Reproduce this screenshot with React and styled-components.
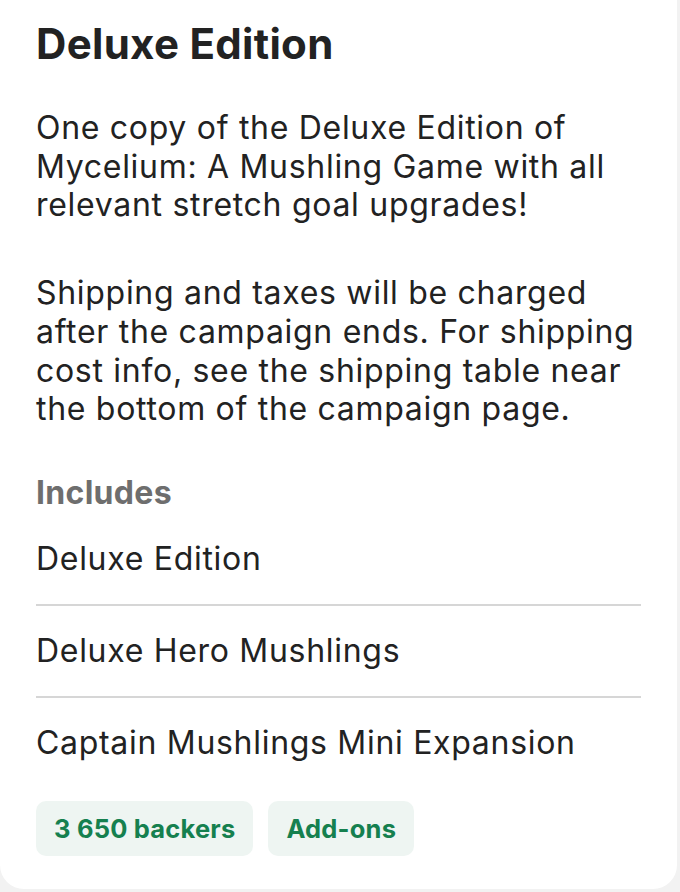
import React from 'react'
import styled, { createGlobalStyle } from 'styled-components';

const GlobalStyle = createGlobalStyle`
  html, body {
    margin: 0;
    padding: 0;
    background: #f2f2f2;
  }
  body {
    font-family: Inter, "Noto Sans", "Liberation Sans", sans-serif;
    -webkit-font-smoothing: antialiased;
  }
`;

const rewards = {
  title: 'Deluxe Edition',
  desc: [
    'One copy of the Deluxe Edition of Mycelium: A Mushling Game with all relevant stretch goal upgrades!',
    'Shipping and taxes will be charged after the campaign ends. For shipping cost info, see the shipping table near the bottom of the campaign page.'
  ],
  items: ['Deluxe Edition', 'Deluxe Hero Mushlings', 'Captain Mushlings Mini Expansion'],
  tags: ['3 650 backers', 'Add-ons']
};

const App = () => {
  const { title, desc, items, tags } = rewards;

  return (
    <>
      <GlobalStyle />
      <Card>
        <Title>{title}</Title>
        {desc.map(d => (
          <Desc key={d}>{d}</Desc>
        ))}
        <Label>Includes</Label>
        <ItemList>
          {items.map(i => (
            <Item key={i}>{i}</Item>
          ))}
        </ItemList>
        <Tags>
          {tags.map(t => (
            <Tag key={t}>{t}</Tag>
          ))}
        </Tags>
      </Card>
    </>
  )
}

const Card = styled.div`
  width: 677px;
  box-sizing: border-box;
  background: #fff;
  border-radius: 0 0 24px 24px;
  padding: 22px 36px 33px;
  color: #222;
`;

const Title = styled.h2`
  margin: 0 0 43px;
  font-size: 42px;
  line-height: 44px;
  font-weight: 700;
  letter-spacing: 0.3px;
  color: #222;
`;

const Desc = styled.p`
  margin: 0 0 49px;
  font-size: 32px;
  line-height: 38.7px;
  font-weight: 400;
  letter-spacing: 0.7px;

  &:last-of-type {
    margin-bottom: 45px;
  }
`;

const Label = styled.div`
  font-size: 32px;
  line-height: 38px;
  font-weight: 700;
  letter-spacing: 0.3px;
  color: #6e6e6e;
`;

const ItemList = styled.div`
  display: flex;
  flex-direction: column;
  margin-top: 2px;
`;

const Item = styled.div`
  font-size: 32px;
  line-height: 38px;
  letter-spacing: 0.7px;
  padding: 26px 0;
  border-bottom: 2px solid #d6d6d6;

  &:last-child {
    border-bottom: none;
    padding-bottom: 39px;
  }
`;

const Tags = styled.div`
  display: flex;
  gap: 15px;
`;

const Tag = styled.span`
  display: inline-flex;
  align-items: center;
  height: 55px;
  padding: 0 18px;
  border-radius: 10px;
  background: #eef5f2;
  color: #15804f;
  font-size: 25.5px;
  font-weight: 700;
  letter-spacing: 0.2px;
`;

export default App
